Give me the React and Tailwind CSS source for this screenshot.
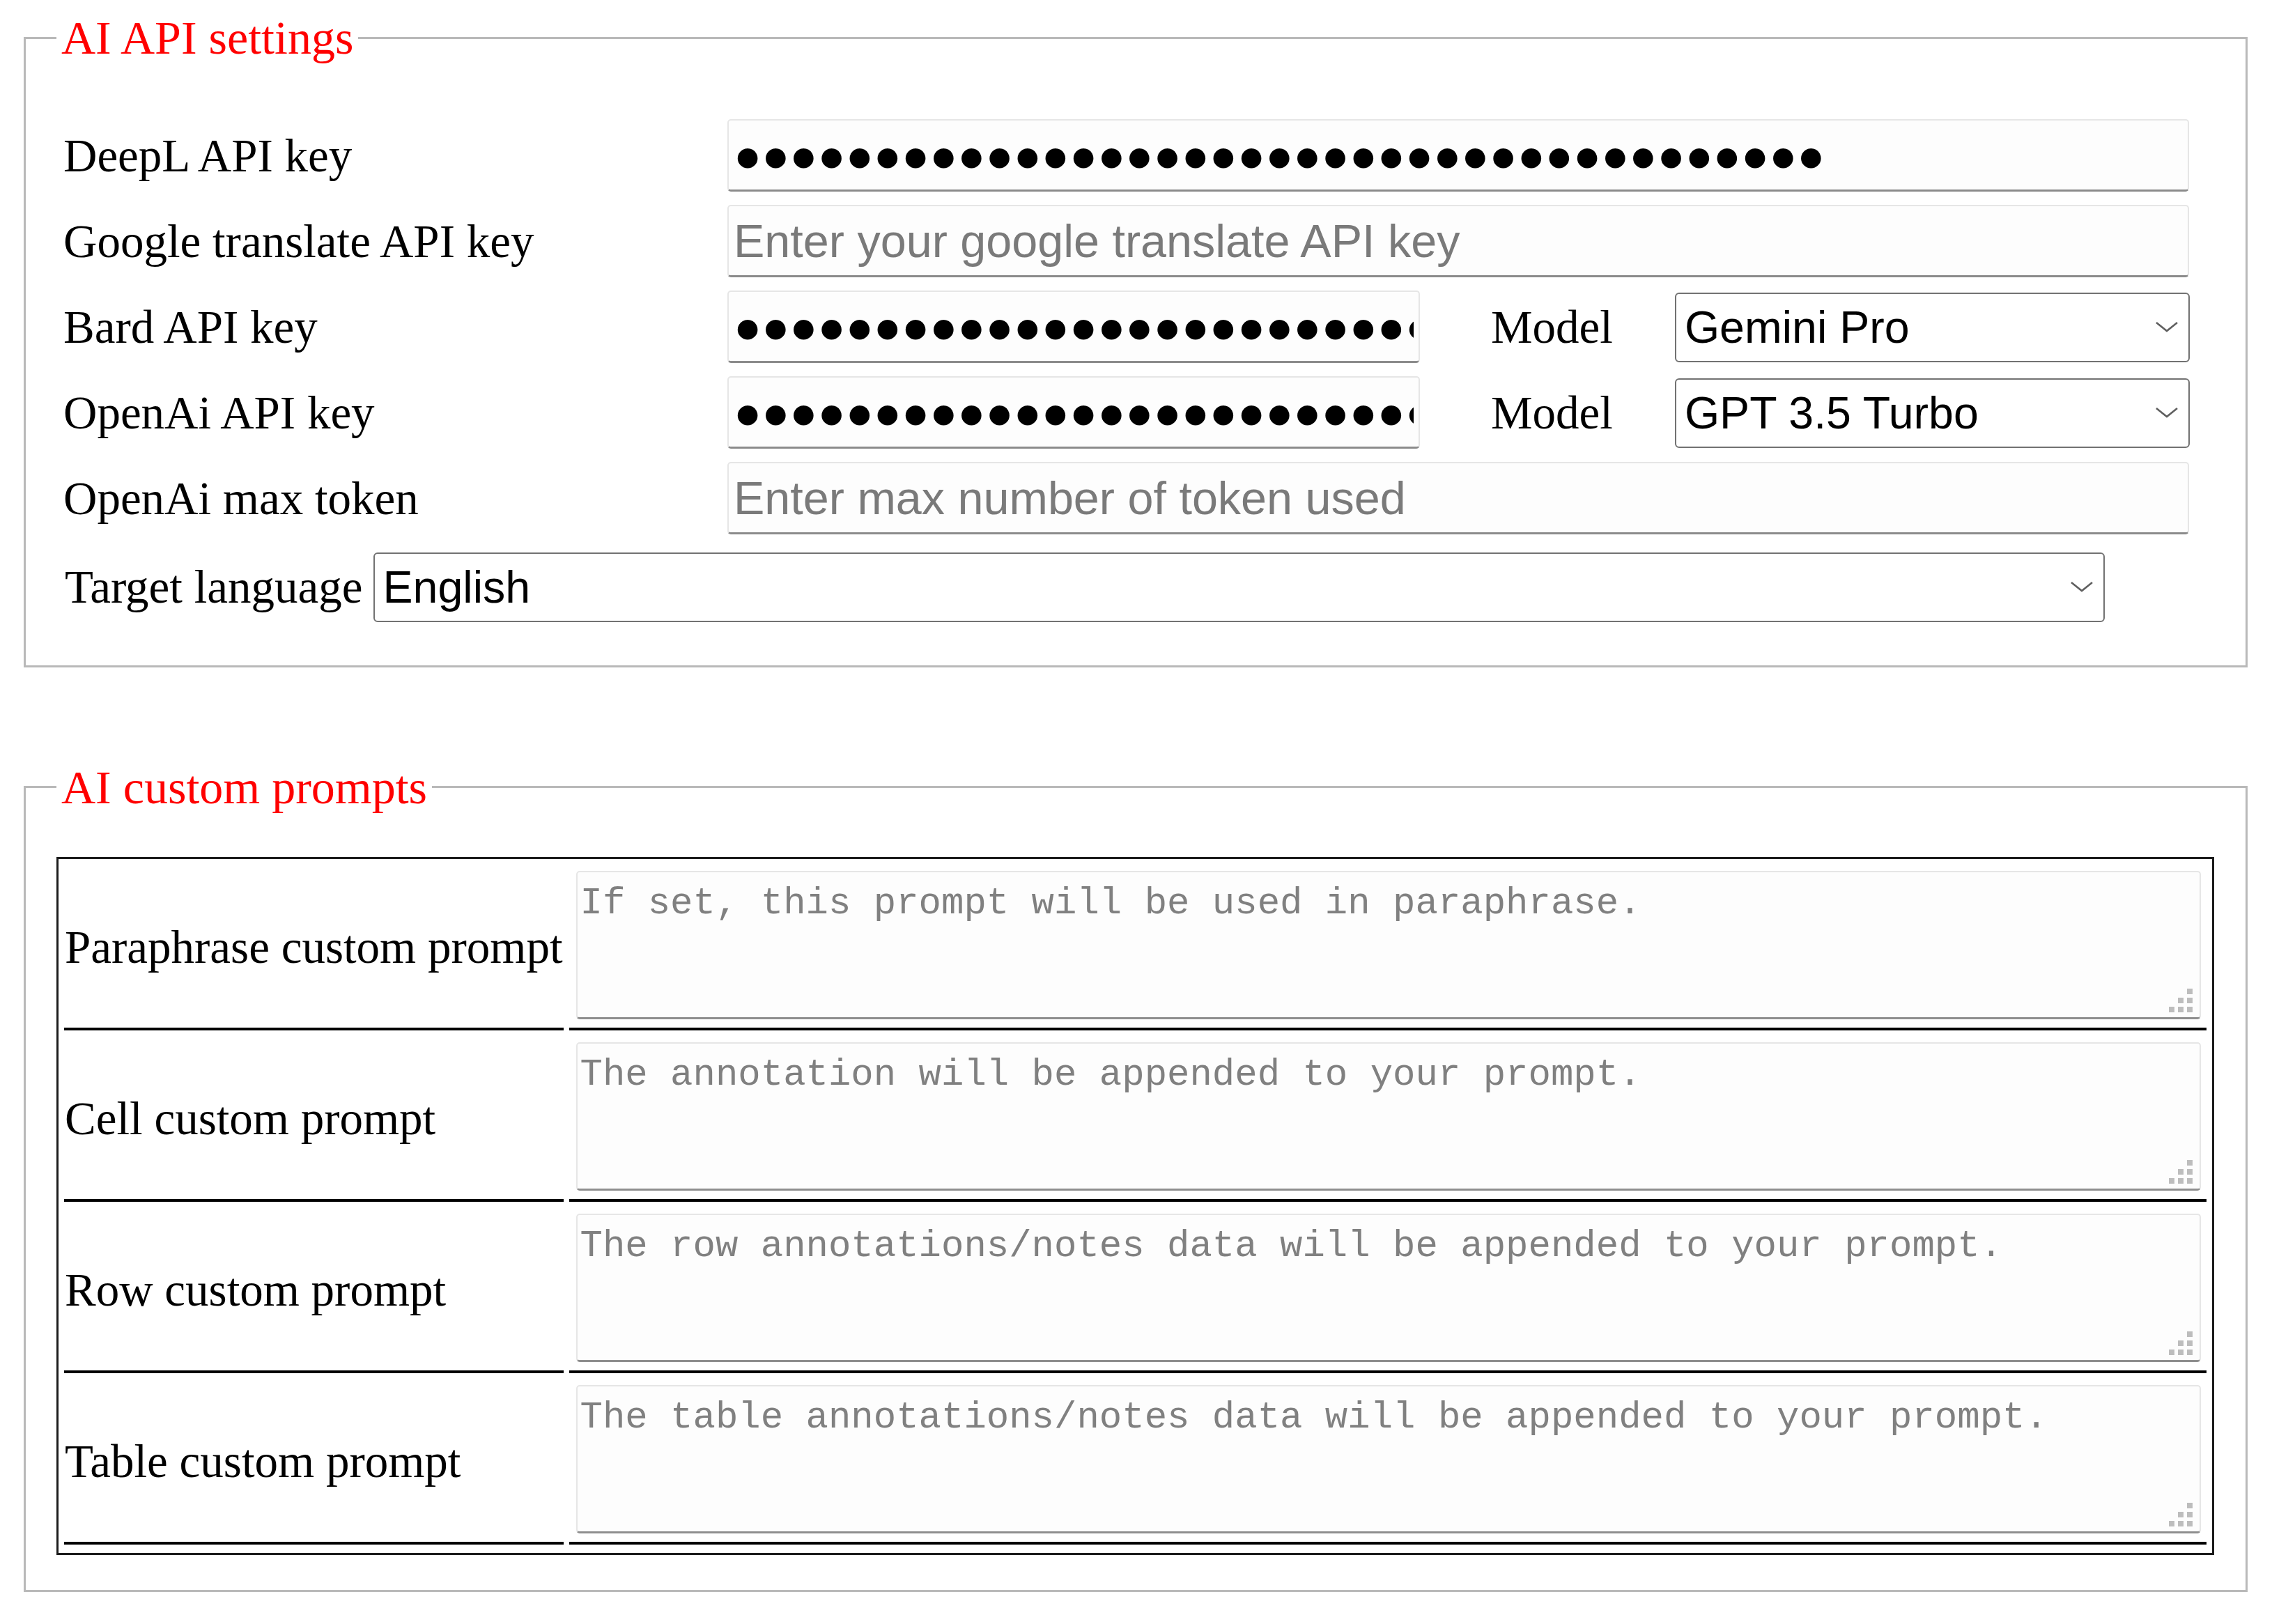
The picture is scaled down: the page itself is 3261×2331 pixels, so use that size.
import React from "react";

const DOTS = "●".repeat(39);

function TextBox({ width, value, placeholder }) {
  return (
    <input
      type="text"
      readOnly={value != null}
      defaultValue={value}
      placeholder={placeholder}
      className={`${width} h-[104px] shrink-0 rounded-[5px] border-2 border-[#e6e6e6] border-b-[3px] border-b-[#8b8b8b] bg-[#fdfdfd] px-[7px] font-['Liberation_Sans',Arial,sans-serif] text-[66.5px] text-black outline-none placeholder:text-[#7a7a7a]`}
    />
  );
}

function Chevron() {
  return (
    <svg
      width="34"
      height="18"
      viewBox="0 0 34 18"
      className="pointer-events-none absolute right-[16px] top-1/2 -translate-y-1/2"
    >
      <path d="M2 3 L17 15 L32 3" fill="none" stroke="#5f5f5f" strokeWidth="2.6" />
    </svg>
  );
}

function Dropdown({ width, value, options }) {
  return (
    <div className={`relative ${width} h-[100px] shrink-0`}>
      <select
        defaultValue={value}
        className="h-full w-full appearance-none rounded-[6px] border-2 border-[#727272] bg-white pl-[12px] font-['Liberation_Sans',Arial,sans-serif] text-[64.5px] text-black outline-none"
      >
        {options.map((o) => (
          <option key={o}>{o}</option>
        ))}
      </select>
      <Chevron />
    </div>
  );
}

function Row({ label, children }) {
  return (
    <div className="flex h-[104px] items-center">
      <span className="w-[963px] shrink-0 whitespace-nowrap pl-[10px] leading-normal">{label}</span>
      {children}
    </div>
  );
}

function Grip() {
  return (
    <svg width="40" height="40" viewBox="0 0 40 40" className="pointer-events-none absolute bottom-[7px] right-[9px]">
      <g fill="#bdbdbd">
        <rect x="29" y="3" width="8" height="8" />
        <rect x="16" y="16" width="8" height="8" />
        <rect x="29" y="16" width="8" height="8" />
        <rect x="3" y="29" width="8" height="8" />
        <rect x="16" y="29" width="8" height="8" />
        <rect x="29" y="29" width="8" height="8" />
      </g>
    </svg>
  );
}

const prompts = [
  ["Paraphrase custom prompt", "If set, this prompt will be used in paraphrase."],
  ["Cell custom prompt", "The annotation will be appended to your prompt."],
  ["Row custom prompt", "The row annotations/notes data will be appended to your prompt."],
  ["Table custom prompt", "The table annotations/notes data will be appended to your prompt."],
];

export default function App() {
  return (
    <div className="min-h-screen bg-white pb-[40px] pl-[34px] pt-[16px] font-['Liberation_Serif','Times_New_Roman',serif] text-[67px] text-black">
      <fieldset className="w-[3192px] border-[3px] border-[#b9b9b9] pb-[62px] pl-[44px] pr-[45px] pt-[79px]">
        <legend className="px-[7px] text-[68px] leading-[76px] text-[#ff0000]">AI API settings</legend>

        <div className="flex flex-col gap-[19px]">
          <Row label="DeepL API key">
            <TextBox width="w-[2098px]" value={DOTS} />
          </Row>
          <Row label="Google translate API key">
            <TextBox width="w-[2098px]" placeholder="Enter your google translate API key" />
          </Row>
          <Row label="Bard API key">
            <TextBox width="w-[994px]" value={DOTS} />
            <span className="ml-[102px] leading-normal">Model</span>
            <div className="ml-[89px]">
              <Dropdown width="w-[739px]" value="Gemini Pro" options={["Gemini Pro", "Gemini Pro Vision"]} />
            </div>
          </Row>
          <Row label="OpenAi API key">
            <TextBox width="w-[994px]" value={DOTS} />
            <span className="ml-[102px] leading-normal">Model</span>
            <div className="ml-[89px]">
              <Dropdown width="w-[739px]" value="GPT 3.5 Turbo" options={["GPT 3.5 Turbo", "GPT 4", "GPT 4 Turbo"]} />
            </div>
          </Row>
          <Row label="OpenAi max token">
            <TextBox width="w-[2098px]" placeholder="Enter max number of token used" />
          </Row>
        </div>

        <div className="mt-[25px] flex items-center">
          <span className="whitespace-nowrap pl-[12px] leading-normal">Target language</span>
          <div className="ml-[15px]">
            <Dropdown width="w-[2485px]" value="English" options={["English", "French", "German", "Spanish", "Japanese"]} />
          </div>
        </div>
      </fieldset>

      <fieldset className="mt-[134px] w-[3192px] border-[3px] border-[#b9b9b9] pb-[50px] pl-[44px] pr-[45px] pt-[62px]">
        <legend className="px-[7px] text-[68px] leading-[76px] text-[#ff0000]">AI custom prompts</legend>

        <table className="w-full border-separate border-spacing-x-[8px] border-spacing-y-[12px] border-[3px] border-[#1c1c1c]">
          <tbody>
            {prompts.map(([label, hint]) => (
              <tr key={label}>
                <td className="w-[715px] whitespace-nowrap border-b-4 border-black px-[1px] align-middle leading-normal">
                  {label}
                </td>
                <td className="border-b-4 border-black pb-[12px] pl-[10px] pr-[8px] pt-[5px]">
                  <div className="relative">
                    <textarea
                      placeholder={hint}
                      className="block h-[213px] w-full resize-none rounded-[5px] border-2 border-[#e6e6e6] border-b-[3px] border-b-[#8e8e8e] bg-[#fdfdfd] pl-[4px] pt-[4px] font-['Liberation_Mono','Courier_New',monospace] text-[54px] leading-normal outline-none placeholder:text-[#808080]"
                    />
                    <Grip />
                  </div>
                </td>
              </tr>
            ))}
          </tbody>
        </table>
      </fieldset>
    </div>
  );
}
